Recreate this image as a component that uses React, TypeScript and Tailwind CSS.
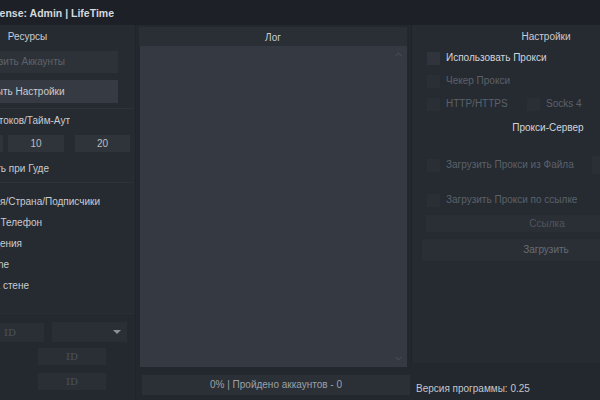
import { ChevronDown, ChevronUp } from "lucide-react";

// the window is wider than the shot: it starts 80px left of the frame
const font = { fontFamily: '"Liberation Sans", Arial, sans-serif' };

// text whose right edge is known, cut off on its left side
function Clip({ right, children, className = "" }: { right: number; children: React.ReactNode; className?: string }) {
  return (
    <div dir="rtl" className={"overflow-hidden whitespace-nowrap " + className} style={{ width: right }}>
      <span dir="ltr">{children}</span>
    </div>
  );
}

function Check({ label, dim = false }: { label: string; dim?: boolean }) {
  return (
    <div className="flex items-center gap-[6px]">
      <span className={"w-[13px] h-[13px] shrink-0 " + (dim ? "bg-[#2a2f36]" : "bg-[#30353d]")} />
      <span className={dim ? "text-[#5b6169]" : "text-[#d2d5da]"}>{label}</span>
    </div>
  );
}

export default function App() {
  return (
    <div className="w-[600px] h-[400px] overflow-hidden bg-[#23272e] text-[10px] leading-[14px]" style={font}>
      <div className="w-[760px] h-full -ml-[80px] flex flex-col">
        <div className="h-[25px] shrink-0 bg-[#1d2027] flex items-center">
          <Clip right={194} className="text-[10.5px] font-bold text-[#d5d8dd]">License: Admin | LifeTime</Clip>
        </div>

        <div className="flex flex-1">
          {/* Ресурсы */}
          <div className="w-[216px] shrink-0 bg-[#262b32] border-r border-[#20242a] flex flex-col text-[#c9ccd1]">
            <div className="h-[20px] flex items-center justify-center pt-[3px]">Ресурсы</div>
            <div className="mt-[6px] w-[198px] h-[22px] bg-[#2d3239] flex items-center justify-center text-[#5d636b]">Загрузить Аккаунты</div>
            <div className="mt-[7px] w-[198px] h-[23px] bg-[#363b43] flex items-center justify-center">Открыть Настройки</div>
            <div className="mt-[5px] h-px bg-[#2e333a] mr-[2px]" />
            <Clip right={150} className="mt-[5px]">Кол-во Потоков/Тайм-Аут</Clip>
            <div className="mt-[7px] flex gap-[5px] ml-[27px] text-[#b9bdc3]">
              <div className="w-[56px] h-[17px] bg-[#2f343b] flex items-center justify-center">1</div>
              <div className="w-[56px] h-[17px] bg-[#2f343b] flex items-center justify-center">10</div>
              <div className="w-[55px] h-[17px] bg-[#2f343b] flex items-center justify-center ml-[6px]">20</div>
            </div>
            <Clip right={129} className="mt-[10px]">Сохранить при Гуде</Clip>
            <div className="mt-[6px] h-px bg-[#2e333a] mr-[2px]" />
            <div className="mt-[8px] flex flex-col">
              <Clip right={180} className="h-[21px] leading-[21px]">Имя/Страна/Подписчики</Clip>
              <Clip right={122} className="h-[21px] leading-[21px]">Номер   Телефон</Clip>
              <Clip right={102} className="h-[21px] leading-[21px]">Сообщения</Clip>
              <Clip right={89} className="h-[21px] leading-[21px]">Online</Clip>
              <Clip right={109} className="h-[21px] leading-[21px]">Записи на стене</Clip>
            </div>
            <div className="mt-[17px] h-px bg-[#2a2f36] mr-[2px]" />
            <div className="flex-1 bg-[#242930] flex flex-col" style={{ fontFamily: '"DejaVu Serif", serif' }}>
              <div className="mt-[8px] flex items-start">
                <div className="ml-[56px] mt-px w-[68px] h-[19px] bg-[#2a2f36] flex items-center justify-center text-[#4b5159] text-[10px]">ID</div>
                <div className="ml-[8px] w-[75px] h-[20px] bg-[#2a2f36] flex items-center justify-end pr-[6px]">
                  <span className="w-0 h-0 border-l-[4px] border-r-[4px] border-t-[4px] border-l-transparent border-r-transparent border-t-[#8a9098]" />
                </div>
              </div>
              <div className="mt-[6px] ml-[118px] w-[68px] h-[17px] bg-[#2a2f36] flex items-center justify-center text-[#4b5159] text-[10px]">ID</div>
              <div className="mt-[8px] ml-[118px] w-[68px] h-[17px] bg-[#2a2f36] flex items-center justify-center text-[#4b5159] text-[10px]">ID</div>
            </div>
          </div>

          {/* Лог */}
          <div className="w-[275px] shrink-0 flex flex-col pl-[3px] pr-[4px]">
            <div className="mt-[2px] h-[19px] bg-[#2a2f36] flex items-center justify-center text-[#c9ccd1] pt-[2px]">Лог</div>
            <div className="ml-px h-[321px] bg-[#353a42] flex flex-col items-end justify-between pr-[3px] py-[3px] text-[#454b53]">
              <ChevronUp size={11} strokeWidth={2.5} />
              <ChevronDown size={11} strokeWidth={2.5} />
            </div>
            <div className="mt-[8px] ml-[3px] w-[268px] h-[20px] bg-[#2b3037] flex items-center justify-center text-[#9ba0a7]">
              0% | Пройдено аккаунтов - 0
            </div>
          </div>

          {/* Настройки */}
          <div className="flex-1 flex flex-col">
            <div className="h-[338px] bg-[#262b32] border-l border-[#20242a] flex flex-col">
              <div className="h-[20px] flex items-center justify-center pt-[3px] text-[#c9ccd1]">Настройки</div>
              <div className="ml-[15px] mt-[6px] flex flex-col gap-[9px]">
                <Check label="Использовать Прокси" />
                <Check label="Чекер Прокси" dim />
                <div className="flex">
                  <div className="w-[100px]">
                    <Check label="HTTP/HTTPS" dim />
                  </div>
                  <Check label="Socks 4" dim />
                </div>
              </div>
              <div className="mt-[10px] text-center text-[#d2d5da] pl-[4px]">Прокси-Сервер</div>
              <div className="mt-[21px] ml-[15px] flex items-center">
                <div className="w-[165px]">
                  <Check label="Загрузить Прокси из Файла" dim />
                </div>
                <span className="w-[40px] h-[18px] bg-[#2a2f36]" />
              </div>
              <div className="mt-[19px] ml-[15px]">
                <Check label="Загрузить Прокси по ссылке" dim />
              </div>
              <div className="mt-[8px] ml-[14px] mr-[12px] h-[17px] bg-[#2a2f36] flex items-center justify-center text-[#4f555d]">Ссылка</div>
              <div className="mt-[7px] ml-[10px] mr-[10px] h-[22px] bg-[#2a2f36] flex items-center justify-center text-[#666c74]">Загрузить</div>
            </div>
            <div className="mt-[19px] ml-[5px] text-[#c3c7cc]">Версия программы: 0.25</div>
          </div>
        </div>
      </div>
    </div>
  );
}
